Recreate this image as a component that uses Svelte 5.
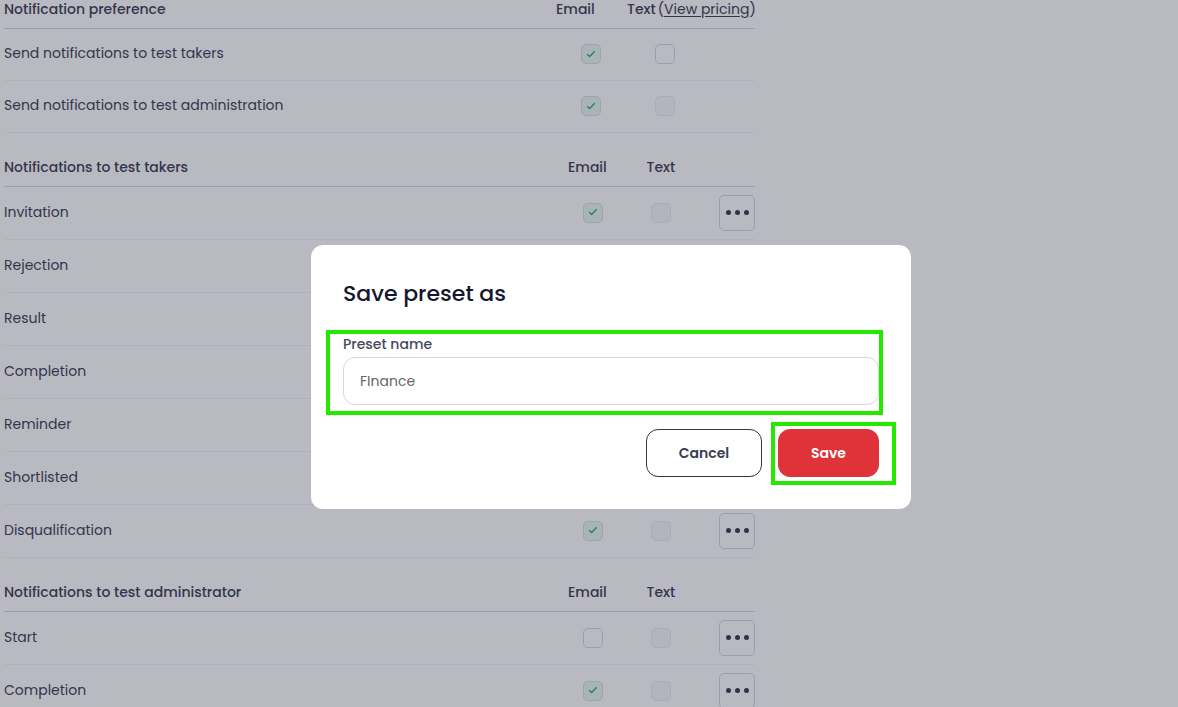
<script lang="ts">
	type Row = { label: string; email: string; text: string };

	const off = 'disabled';

	const sections: { title: string; kind: string; pricing: boolean; rows: Row[] }[] = [
		{
			title: 'Notification preference',
			kind: 'preference',
			pricing: true,
			rows: [
				{ label: 'Send notifications to test takers', email: 'checked', text: '' },
				{ label: 'Send notifications to test administration', email: 'checked', text: off }
			]
		},
		{
			title: 'Notifications to test takers',
			kind: 'events',
			pricing: false,
			rows: ['Invitation', 'Rejection', 'Result', 'Completion', 'Reminder', 'Shortlisted', 'Disqualification'].map(
				(label) => ({ label, email: 'checked', text: off })
			)
		},
		{
			title: 'Notifications to test administrator',
			kind: 'events',
			pricing: false,
			rows: [
				{ label: 'Start', email: '', text: off },
				{ label: 'Completion', email: 'checked', text: off }
			]
		}
	];

	let presetName = $state('FInance');
</script>

{#snippet box(state: string)}
	<span class="box {state}">
		{#if state === 'checked'}
			<svg width="10" height="8" viewBox="0 0 10 8">
				<path d="M1.2 4.2 3.7 6.5 8.7 1.2" />
			</svg>
		{/if}
	</span>
{/snippet}

<div class="page">
	<main>
		{#each sections as section}
			<section class={section.kind}>
				<div class="row head">
					<h2>{section.title}</h2>
					<span>Email</span>
					<span class="text-head">
						<span>Text</span>
						{#if section.pricing}<span class="pricing">(<a href="#pricing">View pricing</a>)</span>{/if}
					</span>
				</div>
				{#each section.rows as row}
					<div class="row">
						<span class="label">{row.label}</span>
						<span class="email">{@render box(row.email)}</span>
						<span class="text">{@render box(row.text)}</span>
						{#if section.kind === 'events'}
							<button class="more" aria-label="More">
								<svg width="24" height="6" viewBox="0 0 24 6">
									<circle cx="3.5" cy="2.5" r="2.5" />
									<circle cx="12.5" cy="2.5" r="2.5" />
									<circle cx="21.5" cy="2.5" r="2.5" />
								</svg>
							</button>
						{/if}
					</div>
				{/each}
			</section>
		{/each}
	</main>

	<div class="modal" role="dialog">
		<h1>Save preset as</h1>
		<label for="preset">Preset name</label>
		<input id="preset" bind:value={presetName} />
		<div class="actions">
			<button class="cancel">Cancel</button>
			<button class="save">Save</button>
		</div>
		<div class="mark mark-field"></div>
		<div class="mark mark-save"></div>
	</div>
</div>

<style>
	:global(body) {
		overflow: hidden;
	}

	.page {
		position: relative;
		height: 707px;
		overflow: hidden;
		background: #b9b9c2;
		color: #33354b;
		font-family: Poppins, Inter, sans-serif;
		font-size: 14px;
		line-height: 20px;
	}

	main {
		width: 751px;
		padding-left: 4px;
	}

	.row {
		display: grid;
		box-sizing: border-box;
		height: 53px;
		border-bottom: 1px solid #b0b1bb;
	}

	.preference .row {
		grid-template-columns: 552px 71px 128px;
		height: 52px;
	}

	.events .row {
		grid-template-columns: 564px 78.5px 72.5px 36px;
	}

	.row.head {
		height: 54px;
		padding-top: 24px;
		border-color: #9d9eab;
		font-weight: 500;
	}

	.preference .row.head {
		height: 29px;
		padding-top: 0;
		line-height: 18px;
	}

	h2 {
		margin: 0;
		font-size: 14px;
		font-weight: 500;
	}

	.text-head {
		display: flex;
		gap: 2px;
		white-space: nowrap;
	}

	.pricing {
		font-weight: 400;
	}

	a {
		color: inherit;
		text-underline-offset: 2px;
	}

	.label {
		padding-top: 15px;
	}

	.preference .label {
		padding-top: 14px;
	}

	.email,
	.text {
		padding: 16px 0 0 15px;
	}

	.text {
		padding-left: 4.5px;
	}

	.preference .email,
	.preference .text {
		padding: 15px 0 0 25px;
	}

	.preference .text {
		padding-left: 28px;
	}

	.box {
		display: flex;
		align-items: center;
		justify-content: center;
		box-sizing: border-box;
		width: 20px;
		height: 20px;
		border: 1px solid #9d9eac;
		border-radius: 5px;
	}

	.box.checked {
		background: #a9b4b6;
		border-color: #9da3b0;
	}

	.box.disabled {
		background: #b2b5be;
		border-color: #a9acb8;
	}

	.box path {
		fill: none;
		stroke: #26816a;
		stroke-width: 1.4;
	}

	.events .box svg {
		margin-bottom: 2px;
	}

	.more {
		display: flex;
		align-items: center;
		justify-content: center;
		width: 36px;
		height: 36px;
		margin-top: 8px;
		padding: 0;
		border: 1px solid #9d9eac;
		border-radius: 5px;
		background: none;
		fill: #303249;
	}

	.modal {
		position: absolute;
		top: 245px;
		left: 311px;
		box-sizing: border-box;
		width: 600px;
		height: 264px;
		padding: 32px;
		border-radius: 12px;
		background: #fff;
	}

	h1 {
		margin: 0 0 17px;
		color: #14172f;
		font-size: 22px;
		font-weight: 500;
		line-height: 34px;
	}

	label {
		display: block;
		height: 29px;
		line-height: 32px;
		color: #464960;
		font-weight: 500;
	}

	input {
		display: block;
		box-sizing: border-box;
		width: 536px;
		height: 48px;
		padding: 0 16px;
		border: 1px solid #d5d8e2;
		border-radius: 12px;
		color: #666;
		font: inherit;
	}

	.actions {
		display: flex;
		justify-content: flex-end;
		gap: 16px;
		padding-top: 24px;
	}

	.actions button {
		width: 116px;
		height: 48px;
		padding: 0;
		border: 1px solid #34364c;
		border-radius: 12px;
		background: #fff;
		color: #3a3d54;
		font: inherit;
		font-weight: 600;
	}

	.actions .save {
		width: 101px;
		border-color: #e03339;
		background: #e03339;
		color: #fff;
	}

	.mark {
		position: absolute;
		box-sizing: border-box;
		border: 4px solid #25e800;
		pointer-events: none;
	}

	.mark-field {
		top: 85px;
		left: 15px;
		width: 557px;
		height: 85px;
	}

	.mark-save {
		top: 177px;
		left: 460px;
		width: 125px;
		height: 63px;
	}
</style>
